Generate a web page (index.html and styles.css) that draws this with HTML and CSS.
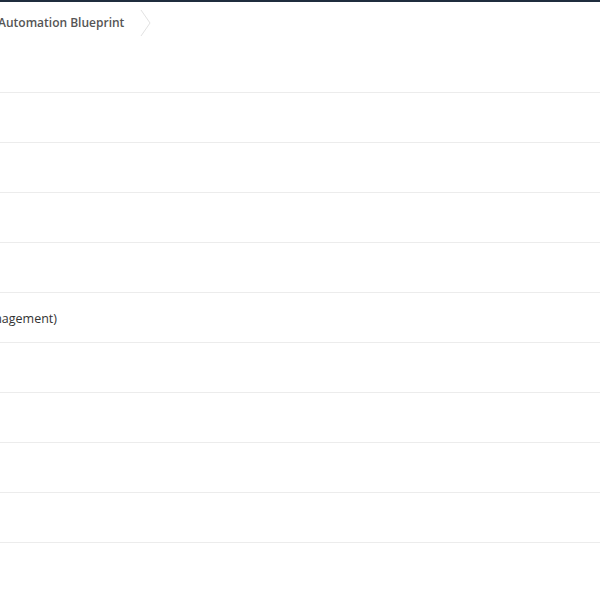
FILE: index.html
```
<!DOCTYPE html>
<html>
<head>
<meta charset="utf-8">
<link rel="stylesheet" href="styles.css">
</head>
<body>
<div class="topbar"></div>
<div class="crumbs">
  <span class="crumb">Automation Blueprint</span>
  <svg class="chev" width="12" height="28" viewBox="0 0 12 28"><polyline points="1,1 10,14 1,27" fill="none" stroke="#e2e2e2" stroke-width="1"/></svg>
</div>
<div class="rows">
  <div class="row"></div>
  <div class="row"></div>
  <div class="row"></div>
  <div class="row"></div>
  <div class="row"></div>
  <div class="row"><span class="cell">Change Management (Asset Management)</span></div>
  <div class="row"></div>
  <div class="row"></div>
  <div class="row"></div>
  <div class="row"></div>
</div>
</body>
</html>
```
FILE: styles.css
```
html, body { margin: 0; padding: 0; background: #fff; overflow: hidden; }
body { font-family: "Open Sans", "Liberation Sans", sans-serif; color: #333; width: 600px; height: 600px; }
.topbar { height: 2px; background: #1f2d3d; }
.crumbs { height: 41px; display: flex; align-items: center; margin-left: -2px; }
.crumb { font-size: 12px; font-weight: 600; color: #555; }
.chev { margin-left: 16px; }
.rows { display: flex; flex-direction: column; }
.row { height: 49px; border-bottom: 1px solid #ececec; display: flex; align-items: center; overflow: hidden; }
.cell { font-size: 12.5px; color: #333; white-space: nowrap; margin-left: -190px; padding-top: 2px; }
```
